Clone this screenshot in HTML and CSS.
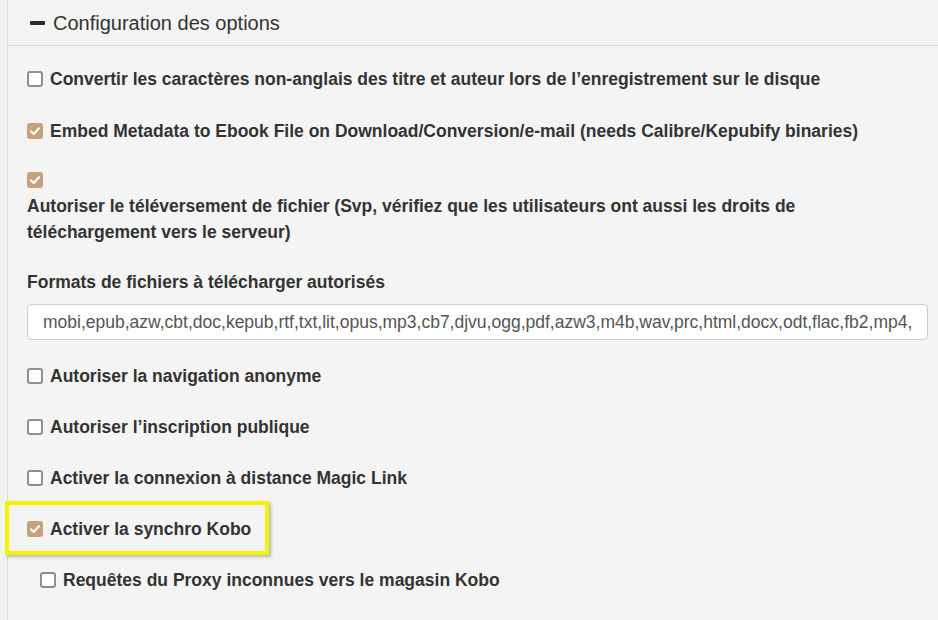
FILE: index.html
```html
<!DOCTYPE html>
<html lang="fr">
<head>
<meta charset="utf-8">
<title>Configuration des options</title>
<link rel="stylesheet" href="styles.css">
</head>
<body>
<div class="panel">
  <div class="panel-heading">
    <span class="minus"></span>
    <span class="title">Configuration des options</span>
  </div>
  <div class="panel-body">
    <label class="check-row first">
      <span class="box"></span>
      <span>Convertir les caractères non-anglais des titre et auteur lors de l’enregistrement sur le disque</span>
    </label>
    <label class="check-row before-block">
      <span class="box checked"><svg viewBox="0 0 16 16"><path d="M4 8.3l2.7 2.7L12 5.3" fill="none" stroke="#fff" stroke-width="2.2" stroke-linecap="round" stroke-linejoin="round"/></svg></span>
      <span>Embed Metadata to Ebook File on Download/Conversion/e-mail (needs Calibre/Kepubify binaries)</span>
    </label>
    <label class="check-block">
      <span class="check-line"><span class="box checked"><svg viewBox="0 0 16 16"><path d="M4 8.3l2.7 2.7L12 5.3" fill="none" stroke="#fff" stroke-width="2.2" stroke-linecap="round" stroke-linejoin="round"/></svg></span></span>
      <span class="block-text">Autoriser le téléversement de fichier (Svp, vérifiez que les utilisateurs ont aussi les droits de téléchargement vers le serveur)</span>
    </label>
    <div class="field">
      <div class="field-label">Formats de fichiers à télécharger autorisés</div>
      <div class="input">mobi,epub,azw,cbt,doc,kepub,rtf,txt,lit,opus,mp3,cb7,djvu,ogg,pdf,azw3,m4b,wav,prc,html,docx,odt,flac,fb2,mp4,</div>
    </div>
    <label class="check-row">
      <span class="box"></span>
      <span>Autoriser la navigation anonyme</span>
    </label>
    <label class="check-row">
      <span class="box"></span>
      <span>Autoriser l’inscription publique</span>
    </label>
    <label class="check-row">
      <span class="box"></span>
      <span>Activer la connexion à distance Magic Link</span>
    </label>
    <label class="check-row kobo">
      <span class="box checked"><svg viewBox="0 0 16 16"><path d="M4 8.3l2.7 2.7L12 5.3" fill="none" stroke="#fff" stroke-width="2.2" stroke-linecap="round" stroke-linejoin="round"/></svg></span>
      <span>Activer la synchro Kobo</span>
      <span class="highlight"></span>
    </label>
    <label class="check-row sub">
      <span class="box"></span>
      <span>Requêtes du Proxy inconnues vers le magasin Kobo</span>
    </label>
  </div>
</div>
</body>
</html>
```
FILE: styles.css
```css
html, body {
  margin: 0;
  padding: 0;
}
body {
  background: #f2f2f2;
  font-family: "Liberation Sans", Arial, sans-serif;
  color: #333;
  width: 938px;
  height: 620px;
  overflow: hidden;
}
.panel {
  margin-left: 7px;
  border-left: 1px solid #dcdcdc;
  background: #f4f4f4;
  min-height: 620px;
}
.panel-heading {
  height: 46px;
  border-bottom: 1px solid #d9d9d9;
  display: flex;
  align-items: center;
  padding-left: 22px;
  box-sizing: border-box;
}
.minus {
  width: 15px;
  height: 4px;
  background: #2b2b2b;
  border-radius: 1px;
  margin-right: 8px;
  margin-top: 1px;
}
.title {
  font-size: 20px;
  color: #333;
  margin-top: 1px;
}
.panel-body {
  padding: 20px 0 0 19px;
  display: flex;
  flex-direction: column;
}
.check-row {
  display: flex;
  align-items: center;
  height: 26px;
  font-weight: bold;
  font-size: 17.5px;
  margin-bottom: 25px;
  position: relative;
  white-space: nowrap;
}
.check-row.first {
  margin-bottom: 26px;
}
.check-row.before-block {
  margin-bottom: 23px;
}
.box {
  width: 16px;
  height: 16px;
  box-sizing: border-box;
  border: 2px solid #8e8e99;
  border-radius: 3px;
  background: #fff;
  margin-right: 7px;
  flex: none;
  display: flex;
}
.box.checked {
  border: none;
  background: #c6a17c;
}
.box svg {
  width: 16px;
  height: 16px;
}
.check-block {
  display: flex;
  flex-direction: column;
  font-weight: bold;
  font-size: 17.5px;
  line-height: 26px;
  margin-bottom: 24px;
  padding-right: 100px;
}
.check-line {
  height: 26px;
  display: flex;
  align-items: center;
}
.field {
  display: flex;
  flex-direction: column;
  margin-bottom: 23px;
  padding-right: 10px;
}
.field-label {
  font-weight: bold;
  font-size: 17.5px;
  line-height: 26px;
  margin-bottom: 9px;
}
.input {
  height: 36px;
  box-sizing: border-box;
  border: 1px solid #cccccc;
  border-radius: 4px;
  background: #fff;
  color: #555;
  font-size: 17.5px;
  line-height: 34px;
  padding: 0 15px;
  white-space: nowrap;
  overflow: hidden;
}
.sub {
  padding-left: 13px;
}
.highlight {
  position: absolute;
  left: -22px;
  top: -15px;
  width: 264px;
  height: 54px;
  box-sizing: border-box;
  border: 4px solid #f4f400;
  box-shadow: 2px 2px 3px rgba(0,0,0,0.25);
  pointer-events: none;
}
```
